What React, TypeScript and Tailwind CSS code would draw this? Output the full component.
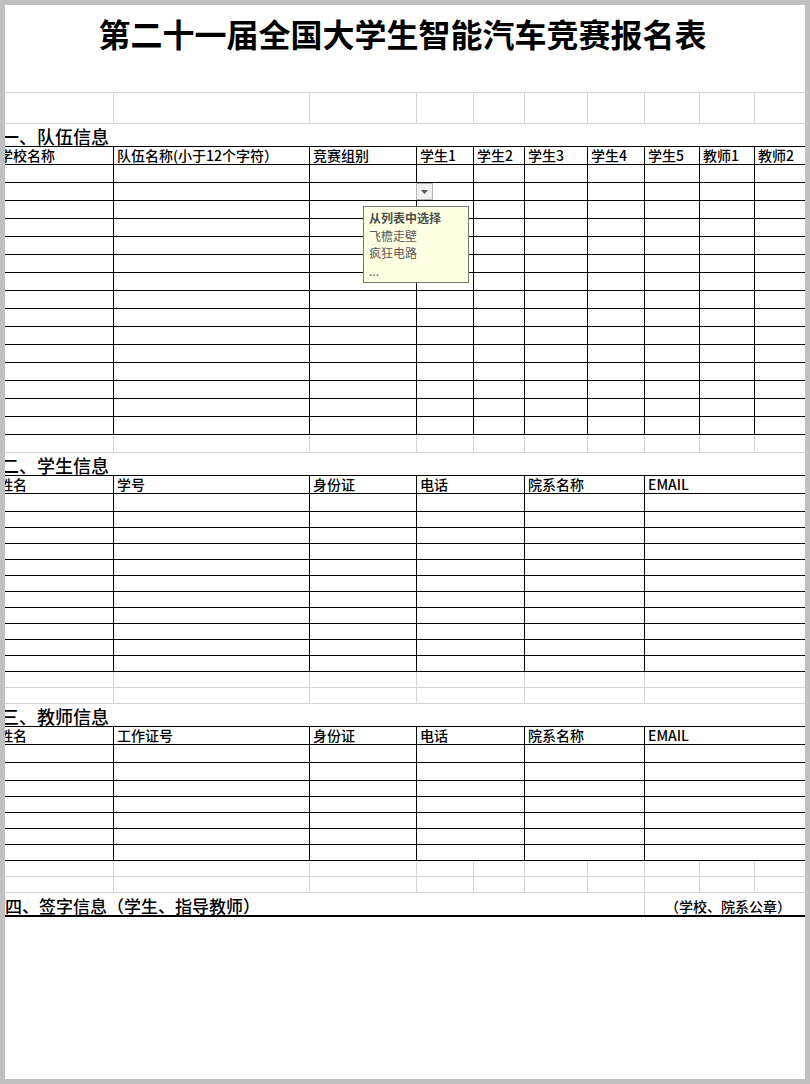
import clsx from "clsx";

const TEAM_W = [
  "w-[119px]",
  "w-[196px]",
  "w-[107px]",
  "w-[57px]",
  "w-[51px]",
  "w-[63px]",
  "w-[57px]",
  "w-[55px]",
  "w-[55px]",
  "w-[80px]",
];
const PERSON_W = ["w-[119px]", "w-[196px]", "w-[107px]", "w-[108px]", "w-[120px]", "w-[200px]"];

const BLACK = "border-black";
const GRAY = "border-[#d4d4d4]";

type RowProps = {
  widths: string[];
  h: string;
  line: string;
  vline?: string;
  top?: boolean;
  labels?: string[];
};

function Row({ widths, h, line, vline, top, labels }: RowProps) {
  return (
    <div className={clsx("flex shrink-0 border-b", h, line, top && "border-t")}>
      {widths.map((w, i) => (
        <div
          key={i}
          className={clsx(
            "shrink-0 overflow-visible whitespace-nowrap border-r text-[14px] font-medium leading-[17px] text-black",
            i === 0 ? "pl-[4px]" : "pl-[3px]",
            w,
            vline ?? line
          )}
        >
          {labels?.[i]}
        </div>
      ))}
    </div>
  );
}

function Heading({ children }: { children: string }) {
  return (
    <div className="h-[22px] shrink-0 pl-[6px] pt-[3px] text-[18px] font-medium leading-[18px] text-black">
      {children}
    </div>
  );
}

function repeat(n: number, render: (i: number) => React.ReactNode) {
  return Array.from({ length: n }, (_, i) => render(i));
}

export default function App() {
  return (
    <div
      className="h-[1084px] w-[810px] bg-[#c0c0c0] p-[5px]"
      style={{ fontFamily: '"Noto Sans CJK SC", "Noto Sans", sans-serif' }}
    >
      <div className="relative flex h-full flex-col overflow-hidden bg-white">
        {/* title */}
        <div className="h-[87px] shrink-0 pr-[5px] pt-[12px] text-center text-[32px] font-bold leading-[32px] text-black">
          第二十一届全国大学生智能汽车竞赛报名表
        </div>

        <div className="ml-[-10px] flex w-[830px] flex-col">
          <Row widths={TEAM_W} h="h-[32px]" line={GRAY} top />

          {/* 一、队伍信息 */}
          <Heading>一、队伍信息</Heading>
          <Row
            widths={TEAM_W}
            h="h-[19px]"
            line={BLACK}
            top
            labels={[
              "学校名称",
              "队伍名称(小于12个字符）",
              "竞赛组别",
              "学生1",
              "学生2",
              "学生3",
              "学生4",
              "学生5",
              "教师1",
              "教师2",
            ]}
          />
          {repeat(15, (i) => (
            <Row key={i} widths={TEAM_W} h="h-[18px]" line={BLACK} />
          ))}
          <Row widths={TEAM_W} h="h-[18px]" line={GRAY} />

          {/* 二、学生信息 */}
          <Heading>二、学生信息</Heading>
          <Row
            widths={PERSON_W}
            h="h-[19px]"
            line={BLACK}
            top
            labels={["姓名", "学号", "身份证", "电话", "院系名称", "EMAIL"]}
          />
          <Row widths={PERSON_W} h="h-[18px]" line={BLACK} />
          {repeat(10, (i) => (
            <Row key={i} widths={PERSON_W} h="h-[16px]" line={BLACK} />
          ))}
          {repeat(2, (i) => (
            <Row key={i} widths={PERSON_W} h="h-[16px]" line={GRAY} />
          ))}

          {/* 三、教师信息 */}
          <Heading>三、教师信息</Heading>
          <Row
            widths={PERSON_W}
            h="h-[19px]"
            line={BLACK}
            top
            labels={["姓名", "工作证号", "身份证", "电话", "院系名称", "EMAIL"]}
          />
          {repeat(2, (i) => (
            <Row key={i} widths={PERSON_W} h="h-[18px]" line={BLACK} />
          ))}
          {repeat(5, (i) => (
            <Row key={i} widths={PERSON_W} h="h-[16px]" line={BLACK} />
          ))}
          {repeat(2, (i) => (
            <Row key={i} widths={TEAM_W} h="h-[16px]" line={GRAY} />
          ))}

          {/* 四、签字信息 */}
          <div className="flex h-[24px] shrink-0 border-b-2 border-black">
            <div className="w-[650px] shrink-0 whitespace-nowrap border-r border-[#d4d4d4] pl-[10px] pt-[4px] text-[17px] font-medium leading-[17px] text-black">
              四、签字信息（学生、指导教师）
            </div>
            <div className="whitespace-nowrap pl-[20px] pt-[6px] text-[14px] font-medium leading-[14px] text-black">
              （学校、院系公章）
            </div>
          </div>
        </div>

        {/* dropdown arrow on 竞赛组别 cell */}
        <div className="absolute left-[411px] top-[178px] flex h-[17px] w-[17px] items-center justify-center border border-[#b4b4b4] bg-[#f0f0f0]">
          <svg width="7" height="4" viewBox="0 0 7 4">
            <path d="M0 0h7L3.5 4z" fill="#555" />
          </svg>
        </div>

        {/* input message */}
        <div className="absolute left-[358px] top-[201px] h-[77px] w-[106px] border border-[#767676] bg-[#ffffe1] pl-[5px] pt-[2px] text-[12px] leading-[17.5px] text-[#5a5a5a]">
          <div className="font-bold text-[#4d4d4d]">从列表中选择</div>
          <div>飞檐走壁</div>
          <div>疯狂电路</div>
          <div>...</div>
        </div>
      </div>
    </div>
  );
}
